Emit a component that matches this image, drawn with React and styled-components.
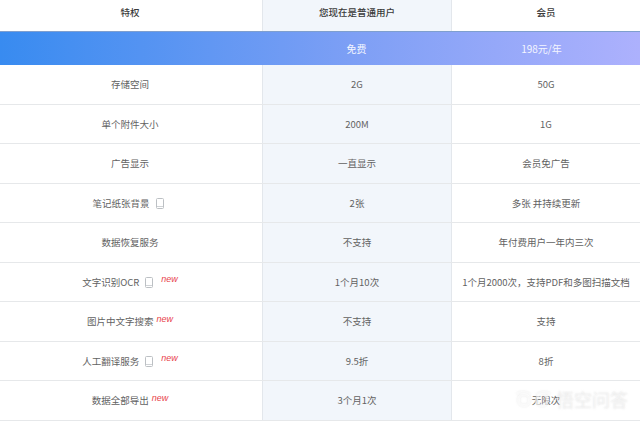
import React from 'react'
import styled, { createGlobalStyle } from 'styled-components';

const Global = createGlobalStyle`
  html, body {
    margin: 0;
    padding: 0;
    background: #fff;
  }
  body {
    font-family: "Noto Sans CJK SC", "Liberation Sans", sans-serif;
  }
`;

const Page = styled.div`
  position: relative;
  width: 640px;
  height: 422px;
  overflow: hidden;
  background: #fff;
`;

const Row = styled.div`
  display: grid;
  grid-template-columns: 262px 189px 189px;
  height: 39.5px;
  box-sizing: border-box;
  border-bottom: 1px solid #e6e8ea;
`;

const HeadRow = styled(Row)`
  height: 31px;
  border-bottom: 0;
`;

const PriceRow = styled.div`
  display: grid;
  grid-template-columns: 262px 189px 189px;
  height: 34px;
  box-sizing: border-box;
  border-top: 1px solid #7f9fce;
  background: linear-gradient(90deg, #388bf0 0%, #7d9ff5 55%, #adb1fd 100%);
`;

const Cell = styled.div`
  display: flex;
  align-items: center;
  justify-content: center;
  box-sizing: border-box;
  padding-bottom: ${({ $head }) => ($head ? '7px' : '0')};
  padding-right: ${({ $name }) => ($name ? '2px' : '0')};
  font-size: 9.5px;
  font-weight: ${({ $head }) => ($head ? 500 : 400)};
  color: ${({ $head }) => ($head ? '#3a3a3a' : '#626262')};
  background: ${({ $current }) => ($current ? '#f2f6fb' : 'transparent')};
  border-left: ${({ $line }) => ($line ? '1px solid #e3e7ec' : '0')};
  white-space: nowrap;
`;

const PriceCell = styled(Cell)`
  padding-right: ${({ $vip }) => ($vip ? '8px' : '0')};
  font-size: 10px;
  color: #f4f6ff;
  background: transparent;
  border-left: 0;
`;

const Label = styled.span`
  position: relative;
  display: inline-flex;
  align-items: center;
  left: ${({ $shift }) => $shift || 0}px;
`;

const Tablet = styled.svg`
  width: 8px;
  height: 11px;
  margin-left: 6px;
  margin-top: 2px;
  flex: none;
`;

const New = styled.i`
  position: relative;
  top: -2px;
  margin-left: ${({ $gap }) => $gap}px;
  font-family: "Liberation Sans", sans-serif;
  font-size: 9px;
  line-height: 1;
  color: #e8434c;
`;

const Watermark = styled.div`
  position: absolute;
  right: 12px;
  bottom: 14px;
  display: flex;
  align-items: center;
  gap: 2px;
  font-size: 18px;
  line-height: 18px;
  color: rgba(255, 255, 255, 0.4);
  text-shadow: 0 0 2px rgba(170, 170, 170, 0.35);
  pointer-events: none;
`;

const WatermarkLogo = styled.svg`
  width: 41px;
  height: 16px;
  filter: drop-shadow(0 0 1px rgba(170, 170, 170, 0.35));
`;

const TabletIcon = () => (
  <Tablet viewBox="0 0 8 11" fill="none">
    <rect x="0.5" y="0.5" width="7" height="10" rx="1" stroke="#bcc0c4" />
    <line x1="1" y1="8.5" x2="7" y2="8.5" stroke="#d0d3d6" />
  </Tablet>
);

const rows = [
  { name: '存储空间', free: '2G', vip: '50G' },
  { name: '单个附件大小', free: '200M', vip: '1G' },
  { name: '广告显示', free: '一直显示', vip: '会员免广告' },
  { name: '笔记纸张背景', tablet: true, shift: -2, free: '2张', vip: '多张 并持续更新' },
  { name: '数据恢复服务', free: '不支持', vip: '年付费用户一年内三次' },
  { name: '文字识别OCR', tablet: true, isNew: 8, free: '1个月10次', vip: '1个月2000次，支持PDF和多图扫描文档' },
  { name: '图片中文字搜索', isNew: 3, free: '不支持', vip: '支持' },
  { name: '人工翻译服务', tablet: true, isNew: 8, free: '9.5折', vip: '8折' },
  { name: '数据全部导出', isNew: 3, free: '3个月1次', vip: '无限次' },
];

const App = () => {
  return (
    <Page>
      <Global />
      <HeadRow>
        <Cell $head $name>特权</Cell>
        <Cell $head $current $line>您现在是普通用户</Cell>
        <Cell $head $line>会员</Cell>
      </HeadRow>
      <PriceRow>
        <PriceCell />
        <PriceCell>免费</PriceCell>
        <PriceCell $vip>198元/年</PriceCell>
      </PriceRow>
      {rows.map((row) => (
        <Row key={row.name}>
          <Cell $name>
            <Label $shift={row.shift}>
              {row.name}
              {row.tablet && <TabletIcon />}
              {row.isNew && <New $gap={row.isNew}>new</New>}
            </Label>
          </Cell>
          <Cell $current $line>{row.free}</Cell>
          <Cell $line>{row.vip}</Cell>
        </Row>
      ))}
      <Watermark>
        <WatermarkLogo viewBox="0 0 41 16" fill="none" stroke="rgba(255,255,255,0.6)" strokeWidth="3">
          <circle cx="11" cy="9" r="5.5" />
          <circle cx="29" cy="9" r="5.5" />
          <path d="M4 3c4-2 9-2 13 1M24 4c4-3 9-3 13-1" />
        </WatermarkLogo>
        悟空问答
      </Watermark>
    </Page>
  )
}

export default App
